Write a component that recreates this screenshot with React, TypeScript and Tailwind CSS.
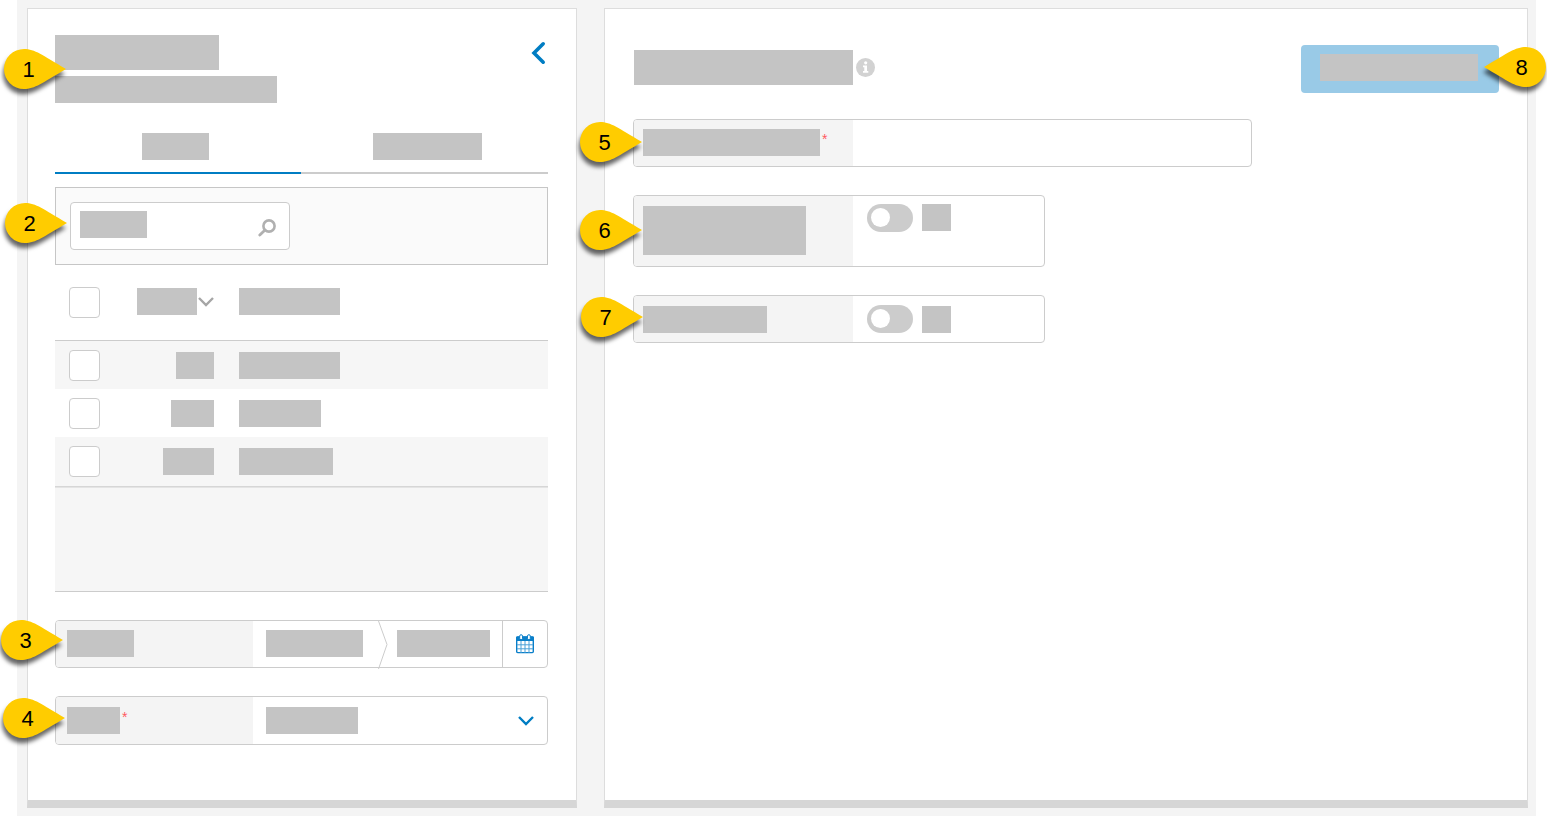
import React, { useState } from "react";
import clsx from "clsx";

// Grey block standing in for a piece of text
const Bar: React.FC<{ className: string }> = ({ className }) => (
  <span className={clsx("block shrink-0 bg-[#c4c4c4]", className)} />
);

const Required: React.FC = () => (
  <span className="text-[14px] leading-5 text-[#ff5a5f]">*</span>
);

// ─── Numbered callout ────────────────────────────────────────────────────────
const Callout: React.FC<{
  value: number;
  className: string;
  flip?: boolean;
}> = ({ value, className, flip }) => (
  <span
    className={clsx(
      "pointer-events-none absolute z-10 flex h-10 w-[62px] items-center pt-[2px]",
      flip ? "justify-end" : "justify-start",
      className,
    )}
  >
    <svg
      viewBox="0 0 62 40"
      className="absolute inset-0 h-10 w-[62px] overflow-visible drop-shadow-[-1px_5px_2px_rgba(0,0,0,0.6)]"
    >
      <path
        d="M62 20C38 6 31 0 20 0a20 20 0 0 0 0 40C31 40 38 34 62 20Z"
        fill="#ffcc00"
        transform={flip ? "translate(62 0) scale(-1 1)" : undefined}
      />
    </svg>
    <span className="relative w-[49px] text-center text-[22px] leading-10 text-black">
      {value}
    </span>
  </span>
);

const ChevronDown: React.FC<{ className: string }> = ({ className }) => (
  <svg
    viewBox="0 0 16 10"
    fill="none"
    stroke="currentColor"
    strokeWidth="2.4"
    className={clsx("h-[10px] w-4 shrink-0", className)}
  >
    <path d="M1 1l7 7L15 1" />
  </svg>
);

const CalendarIcon: React.FC = () => (
  <svg viewBox="0 0 18 20" className="h-5 w-[18px]">
    <rect x="0.7" y="3" width="16.6" height="15.6" rx="1" fill="#fff" stroke="#0a7fc9" strokeWidth="1.4" />
    <path d="M0 3.5a1 1 0 0 1 1-1h16a1 1 0 0 1 1 1V7H0z" fill="#0a7fc9" />
    <path
      d="M5 7v12M9 7v12M13 7v12M1 10.8h16M1 14.8h16"
      stroke="#4ba0d7"
      strokeWidth="1"
    />
    <rect x="3.7" y="0.7" width="2.8" height="5" rx="1.4" fill="#fff" stroke="#0a7fc9" />
    <rect x="11.5" y="0.7" width="2.8" height="5" rx="1.4" fill="#fff" stroke="#0a7fc9" />
  </svg>
);

const CheckBox: React.FC<{ label: string }> = ({ label }) => (
  <input
    type="checkbox"
    aria-label={label}
    className="ml-[14px] block size-[31px] appearance-none rounded-[4px] border border-[#ccc] bg-white checked:bg-[#007dc3]"
  />
);

// ─── Bordered field with a shaded label cell ─────────────────────────────────
const Field: React.FC<{
  className: string;
  labelClass: string;
  label: React.ReactNode;
  htmlFor: string;
  children: React.ReactNode;
}> = ({ className, labelClass, label, htmlFor, children }) => (
  <div
    className={clsx(
      "relative flex rounded-[4px] border border-[#ccc] bg-white",
      className,
    )}
  >
    <label
      htmlFor={htmlFor}
      className={clsx(
        "flex shrink-0 items-start gap-[2px] rounded-l-[3px] bg-[#f4f4f4]",
        labelClass,
      )}
    >
      {label}
    </label>
    {children}
  </div>
);

const Toggle: React.FC<{ id: string }> = ({ id }) => (
  <input
    id={id}
    type="checkbox"
    role="switch"
    className="h-7 w-[46px] shrink-0 appearance-none rounded-full bg-[#ccc] p-1 before:block before:size-[19px] before:rounded-full before:bg-white checked:bg-[#007dc3] checked:before:ml-[19px]"
  />
);

const panel =
  "border border-b-8 border-[#ddd] border-b-[#d6d6d6] bg-white";

const rows = [
  { code: "w-[38px]", name: "w-[101px]" },
  { code: "w-[43px]", name: "w-[82px]" },
  { code: "w-[51px]", name: "w-[94px]" },
];

const Sidebar: React.FC = () => {
  const [tab, setTab] = useState(0);

  return (
    <aside className={clsx("w-[550px] shrink-0 pt-[26px] pr-7 pb-10 pl-[27px]", panel)}>
      <header className="relative flex items-start justify-between">
        <Callout value={1} className="top-[14px] -left-[51px]" />
        <div className="flex flex-col gap-[6px]">
          <Bar className="h-[35px] w-[164px]" />
          <Bar className="h-[27px] w-[222px]" />
        </div>
        <button type="button" aria-label="Collapse" className="pt-[6px] pr-[2px]">
          <svg
            viewBox="0 0 16 24"
            fill="none"
            stroke="#007dc3"
            strokeWidth="3.6"
            strokeLinecap="round"
            className="h-6 w-4"
          >
            <path d="M13.2 2.8L4 12l9.2 9.2" strokeLinejoin="miter" />
          </svg>
        </button>
      </header>

      <nav className="mt-[30px] flex">
        <button
          type="button"
          aria-label="First tab"
          onClick={() => setTab(0)}
          className={clsx(
            "flex flex-1 justify-center border-b-2 pr-1 pb-3",
            tab === 0 ? "border-[#007dc3]" : "border-[#ccc]",
          )}
        >
          <Bar className="h-[27px] w-[67px]" />
        </button>
        <button
          type="button"
          aria-label="Second tab"
          onClick={() => setTab(1)}
          className={clsx(
            "flex flex-1 justify-center border-b-2 pb-3 pl-[6px]",
            tab === 1 ? "border-[#007dc3]" : "border-[#ccc]",
          )}
        >
          <Bar className="h-[27px] w-[109px]" />
        </button>
      </nav>

      <div className="mt-[13px] border border-[#c6c6c6] bg-[#fafafa] p-[14px]">
        <label className="relative flex h-12 w-[220px] items-start rounded-[4px] border border-[#ccc] bg-white pt-2 pr-[13px] pl-[9px]">
          <Callout value={2} className="top-0 -left-[66px]" />
          <Bar className="h-[27px] w-[67px]" />
          <input
            type="search"
            aria-label="Search"
            className="h-[27px] min-w-0 flex-1 bg-transparent px-2 text-sm outline-none"
          />
          <svg
            viewBox="0 0 18 18"
            fill="none"
            stroke="#b0b0b0"
            strokeLinecap="round"
            className="mt-2 size-[18px] shrink-0"
          >
            <circle cx="11" cy="7" r="5.6" strokeWidth="2.6" />
            <path d="M6.8 11.2L1.8 16" strokeWidth="2.8" />
          </svg>
        </label>
      </div>

      <table className="w-full table-fixed border-separate border-spacing-0">
        <thead>
          <tr className="h-[76px] *:border-b *:border-[#ccc] *:p-0 *:align-top">
            <th className="w-[60px]">
              <div className="pt-[22px]">
                <CheckBox label="Select all rows" />
              </div>
            </th>
            <th className="w-[99px]">
              <div className="flex items-center justify-end gap-px pt-[23px]">
                <Bar className="h-[27px] w-[60px]" />
                <ChevronDown className="text-[#a6a6a6]" />
              </div>
            </th>
            <th>
              <div className="pt-[23px] pl-[25px]">
                <Bar className="h-[27px] w-[101px]" />
              </div>
            </th>
          </tr>
        </thead>
        <tbody>
          {rows.map((row, i) => (
            <tr
              key={i}
              className="h-12 *:p-0 *:align-top last:h-[49px] odd:bg-[#f6f6f6]"
            >
              <td>
                <div className="pt-[9px]">
                  <CheckBox label={`Select row ${i + 1}`} />
                </div>
              </td>
              <td>
                <div className="flex justify-end pt-[11px]">
                  <Bar className={clsx("h-[27px]", row.code)} />
                </div>
              </td>
              <td>
                <div className="pt-[11px] pl-[25px]">
                  <Bar className={clsx("h-[27px]", row.name)} />
                </div>
              </td>
            </tr>
          ))}
        </tbody>
      </table>
      <div className="h-[106px] border-t border-b border-t-[#d6d6d6] border-b-[#ccc] bg-[#f6f6f6] shadow-[inset_0_1px_0_#e4e4e4]" />

      <Field
        htmlFor="date-from"
        className="mt-7 h-12"
        labelClass="w-[197px] pt-[9px] pl-[11px]"
        label={<Bar className="h-[27px] w-[67px]" />}
      >
        <Callout value={3} className="-top-px -left-[55px]" />
        <div className="flex flex-1 items-start pl-[13px]">
          <input
            id="date-from"
            readOnly
            className="mt-[9px] h-[27px] w-[97px] bg-[#c4c4c4] outline-none"
          />
          <svg
            viewBox="0 0 10 48"
            fill="none"
            stroke="#ccc"
            className="ml-[15px] h-12 w-[10px] shrink-0"
          >
            <path d="M0.5 0L9 23.5L0.5 48" />
          </svg>
          <input
            aria-label="Date to"
            readOnly
            className="mt-[9px] ml-[9px] h-[27px] w-[93px] bg-[#c4c4c4] outline-none"
          />
        </div>
        <button
          type="button"
          aria-label="Open calendar"
          className="flex w-[45px] items-center justify-center border-l border-[#ccc]"
        >
          <CalendarIcon />
        </button>
      </Field>

      <Field
        htmlFor="category"
        className="mt-7 h-[49px]"
        labelClass="w-[197px] pt-[10px] pl-[11px]"
        label={
          <>
            <Bar className="h-[27px] w-[53px]" />
            <Required />
          </>
        }
      >
        <Callout value={4} className="top-px -left-[53px]" />
        <div className="relative flex flex-1 items-center pr-[13px] pl-[13px]">
          <select
            id="category"
            className="absolute inset-0 h-full w-full appearance-none bg-transparent outline-none"
          >
            <option value="" />
          </select>
          <Bar className="pointer-events-none h-[27px] w-[92px]" />
          <ChevronDown className="pointer-events-none ml-auto text-[#007dc3]" />
        </div>
      </Field>
    </aside>
  );
};

const Details: React.FC = () => (
  <main className={clsx("min-w-0 flex-1 px-7 pt-9 pb-14", panel)}>
    <header className="flex items-start justify-between">
      <div className="flex items-center gap-[3px] pt-[5px] pl-px">
        <Bar className="h-[35px] w-[219px]" />
        <button type="button" aria-label="Information">
          <svg viewBox="0 0 19 19" className="size-[19px]">
            <circle cx="9.5" cy="9.5" r="9.5" fill="#d2d2d2" />
            <circle cx="9.7" cy="4.8" r="1.6" fill="#fff" />
            <path d="M7 7.6h4v5.4h1.3v1.7H7V13h1.3V9.3H7z" fill="#fff" />
          </svg>
        </button>
      </div>
      <div className="relative">
        <button
          type="button"
          aria-label="Save"
          className="flex h-12 w-[198px] items-start rounded-[4px] bg-[#99cae7] pt-[9px] pl-[19px]"
        >
          <Bar className="h-[27px] w-[158px]" />
        </button>
        <Callout value={8} flip className="top-[2px] -right-[47px]" />
      </div>
    </header>

    <Field
      htmlFor="title"
      className="mt-[26px] h-12 max-w-[619px]"
      labelClass="w-[219px] pt-[9px] pl-[9px]"
      label={
        <>
          <Bar className="h-[27px] w-[177px]" />
          <Required />
        </>
      }
    >
      <Callout value={5} className="top-[2px] -left-[54px]" />
      <input
        id="title"
        type="text"
        className="min-w-0 flex-1 bg-transparent px-3 text-base outline-none"
      />
    </Field>

    <Field
      htmlFor="option-a"
      className="mt-7 h-[72px] max-w-[412px]"
      labelClass="w-[219px] pt-[10px] pl-[9px]"
      label={<Bar className="h-[49px] w-[163px]" />}
    >
      <Callout value={6} className="top-[14px] -left-[54px]" />
      <div className="flex items-start gap-[9px] pt-2 pl-[14px]">
        <Toggle id="option-a" />
        <Bar className="h-[27px] w-[29px]" />
      </div>
    </Field>

    <Field
      htmlFor="option-b"
      className="mt-7 h-12 max-w-[412px]"
      labelClass="w-[219px] pt-[10px] pl-[9px]"
      label={<Bar className="h-[27px] w-[124px]" />}
    >
      <Callout value={7} className="top-px -left-[53px]" />
      <div className="flex items-center gap-[9px] pl-[14px]">
        <Toggle id="option-b" />
        <Bar className="h-[27px] w-[29px]" />
      </div>
    </Field>
  </main>
);

export default function App() {
  return (
    <div className="min-h-screen bg-white pr-[11px] pl-[17px] font-['Liberation_Sans',Arial,sans-serif]">
      <div className="flex min-h-screen gap-[27px] bg-[#f4f4f4] py-2 pr-2 pl-[10px]">
        <Sidebar />
        <Details />
      </div>
    </div>
  );
}
